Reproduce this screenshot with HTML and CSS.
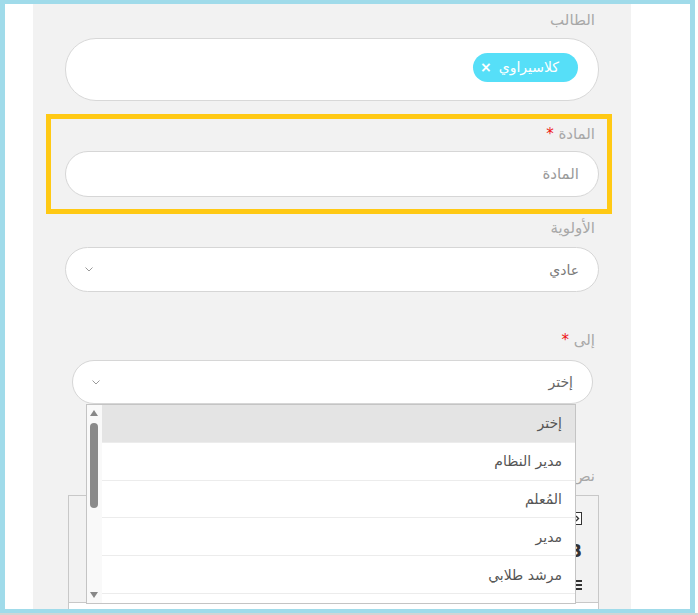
FILE: index.html
```html
<!DOCTYPE html>
<html lang="ar">
<head>
<meta charset="utf-8">
<title>نموذج</title>
<link rel="stylesheet" href="styles.css">
</head>
<body>
<div class="frame">
  <div class="panel">
    <form class="form" dir="rtl">
      <div class="group">
        <label class="label">الطالب</label>
        <div class="tagbox">
          <span class="chip"><span class="chip-text">كلاسيراوي</span><span class="chip-x">×</span></span>
        </div>
      </div>

      <div class="group highlight">
        <label class="label">المادة <span class="req">*</span></label>
        <div class="input"><span class="placeholder">المادة</span></div>
      </div>

      <div class="group g-priority">
        <label class="label">الأولوية</label>
        <div class="select">
          <span class="select-value">عادي</span>
          <svg class="chev" width="8" height="5" viewBox="0 0 8 5"><polyline points="0.5,0.5 4,4 7.5,0.5" fill="none" stroke="#9a9a9a" stroke-width="1"/></svg>
        </div>
      </div>

      <div class="group g-to">
        <label class="label">إلى <span class="req">*</span></label>
        <div class="select-wrap">
          <div class="select">
            <span class="select-value dark">إختر</span>
            <svg class="chev" width="8" height="5" viewBox="0 0 8 5"><polyline points="0.5,0.5 4,4 7.5,0.5" fill="none" stroke="#9a9a9a" stroke-width="1"/></svg>
          </div>
          <div class="dropdown">
            <ul class="options">
              <li class="option active">إختر</li>
              <li class="option">مدير النظام</li>
              <li class="option">المُعلم</li>
              <li class="option">مدير</li>
              <li class="option">مرشد طلابي</li>
              <li class="option"></li>
            </ul>
            <div class="scrollbar">
              <span class="arrow-up"></span>
              <span class="thumb"></span>
              <span class="arrow-down"></span>
            </div>
          </div>
        </div>
      </div>

      <div class="group g-text">
        <label class="label">نص</label>
        <div class="editor">
          <div class="toolbar">
            <div class="tb-row">
              <svg width="14" height="13" viewBox="0 0 14 13"><rect x="0.5" y="0.5" width="13" height="12" fill="#fff" stroke="#333"/><polyline points="8,4 10.5,6.5 8,9" fill="none" stroke="#333" stroke-width="1.4"/></svg>
            </div>
            <div class="tb-row"><span class="tb-b">B</span></div>
            <div class="tb-row">
              <svg width="12" height="11" viewBox="0 0 12 11"><rect x="0" y="1" width="12" height="2" fill="#333"/><rect x="4" y="5" width="8" height="2" fill="#333"/><rect x="0" y="9" width="12" height="2" fill="#333"/></svg>
            </div>
          </div>
          <div class="content"></div>
        </div>
      </div>
    </form>
  </div>
</div>
<div class="baseline"></div>
</body>
</html>
```

FILE: styles.css
```css
html, body {
  margin: 0;
  padding: 0;
  background: #fff;
}

body {
  font-family: "DejaVu Sans", "Noto Sans", sans-serif;
  width: 698px;
  overflow: hidden;
}

.frame {
  width: 695px;
  height: 613px;
  box-sizing: border-box;
  border-style: solid;
  border-color: #a0dbea;
  border-width: 4px 5px 4px 5px;
  background: #fff;
  padding-left: 28px;
  overflow: hidden;
}

.baseline {
  height: 2px;
  background: #d4d4d4;
}

.panel {
  width: 598px;
  height: 100%;
  box-sizing: border-box;
  background: #f2f2f2;
  padding: 4px 32px 0 32px;
  overflow: hidden;
}

.form {
  margin: 0;
}

.label {
  display: block;
  font-size: 15px;
  line-height: 24px;
  color: #a8a8a8;
  padding-right: 4px;
}

.req {
  color: #ee1111;
}

/* tag input */
.tagbox {
  margin-top: 6px;
  height: 63px;
  box-sizing: border-box;
  background: #fff;
  border: 1px solid #d8d8d8;
  border-radius: 31px;
  display: flex;
  align-items: flex-start;
  padding: 14px 20px 0 20px;
}

.chip {
  display: flex;
  align-items: center;
  gap: 7px;
  height: 29px;
  box-sizing: border-box;
  padding: 0 19px 0 7px;
  background: #56dff8;
  border-radius: 15px;
  color: #fff;
  font-size: 14px;
}

.chip-text {
  line-height: 29px;
}

.chip-x {
  font-weight: bold;
  font-size: 14px;
  line-height: 29px;
}

/* highlighted group */
.highlight {
  margin: 13px -13px 0 -19px;
  border: 5px solid #ffc914;
  padding: 3px 8px 12px 14px;
}

.highlight .label {
  margin-bottom: 5px;
}

.input {
  height: 46px;
  box-sizing: border-box;
  background: #fff;
  border: 1px solid #d6d6d6;
  border-radius: 23px;
  padding: 0 19px;
  display: flex;
  align-items: center;
}

.placeholder {
  color: #9a9a9a;
  font-size: 15px;
}

/* selects */
.g-priority {
  margin-top: 2px;
}

.g-priority .select {
  margin-top: 7px;
  height: 45px;
}

.select {
  height: 44px;
  box-sizing: border-box;
  background: #fff;
  border: 1px solid #d6d6d6;
  border-radius: 23px;
  padding: 0 19px 0 19px;
  display: flex;
  align-items: center;
  justify-content: space-between;
}

.select-value {
  font-size: 14px;
  color: #7a7a7a;
}

.select-value.dark {
  color: #666;
}

.chev {
  display: block;
}

.g-to {
  margin-top: 36px;
}

.select-wrap {
  position: relative;
  margin: 8px 6px 0 7px;
}

.dropdown {
  position: absolute;
  top: 100%;
  left: 14px;
  width: 490px;
  height: 200px;
  box-sizing: border-box;
  border: 1px solid #c4c4c4;
  background: #fff;
  display: flex;
  overflow: hidden;
  z-index: 5;
}

.options {
  list-style: none;
  margin: 0;
  padding: 0;
  flex: 1;
}

.option {
  height: 37.8px;
  box-sizing: border-box;
  border-bottom: 1px solid #ececec;
  padding-right: 13px;
  font-size: 14px;
  color: #555;
  display: flex;
  align-items: center;
}

.option.active {
  background: #e4e4e4;
}

.scrollbar {
  width: 15px;
  background: #f9f9f9;
  position: relative;
  flex: none;
}

.arrow-up,
.arrow-down {
  position: absolute;
  left: 3px;
  width: 0;
  height: 0;
  border-left: 4px solid transparent;
  border-right: 4px solid transparent;
}

.arrow-up {
  top: 5px;
  border-bottom: 6px solid #888;
}

.arrow-down {
  bottom: 5px;
  border-top: 6px solid #888;
}

.thumb {
  position: absolute;
  left: 3px;
  top: 18px;
  width: 8px;
  height: 85px;
  border-radius: 4px;
  background: #8a8a8a;
}

/* editor */
.g-text {
  margin-top: 60px;
}

.editor {
  margin: 7px 0 0 3px;
  border: 1px solid #c8c8c8;
  background: #fff;
}

.toolbar {
  height: 107px;
  box-sizing: border-box;
  background: #f2f2f2;
  border-bottom: 1px solid #c8c8c8;
  padding: 14px 16px 0 0;
  display: flex;
  flex-direction: column;
  gap: 17px;
}

.tb-row {
  height: 16px;
  display: flex;
  align-items: center;
}

.tb-b {
  font-family: "DejaVu Sans", sans-serif;
  font-weight: bold;
  font-size: 17px;
  color: #333;
  line-height: 16px;
}

.content {
  height: 80px;
}
```
